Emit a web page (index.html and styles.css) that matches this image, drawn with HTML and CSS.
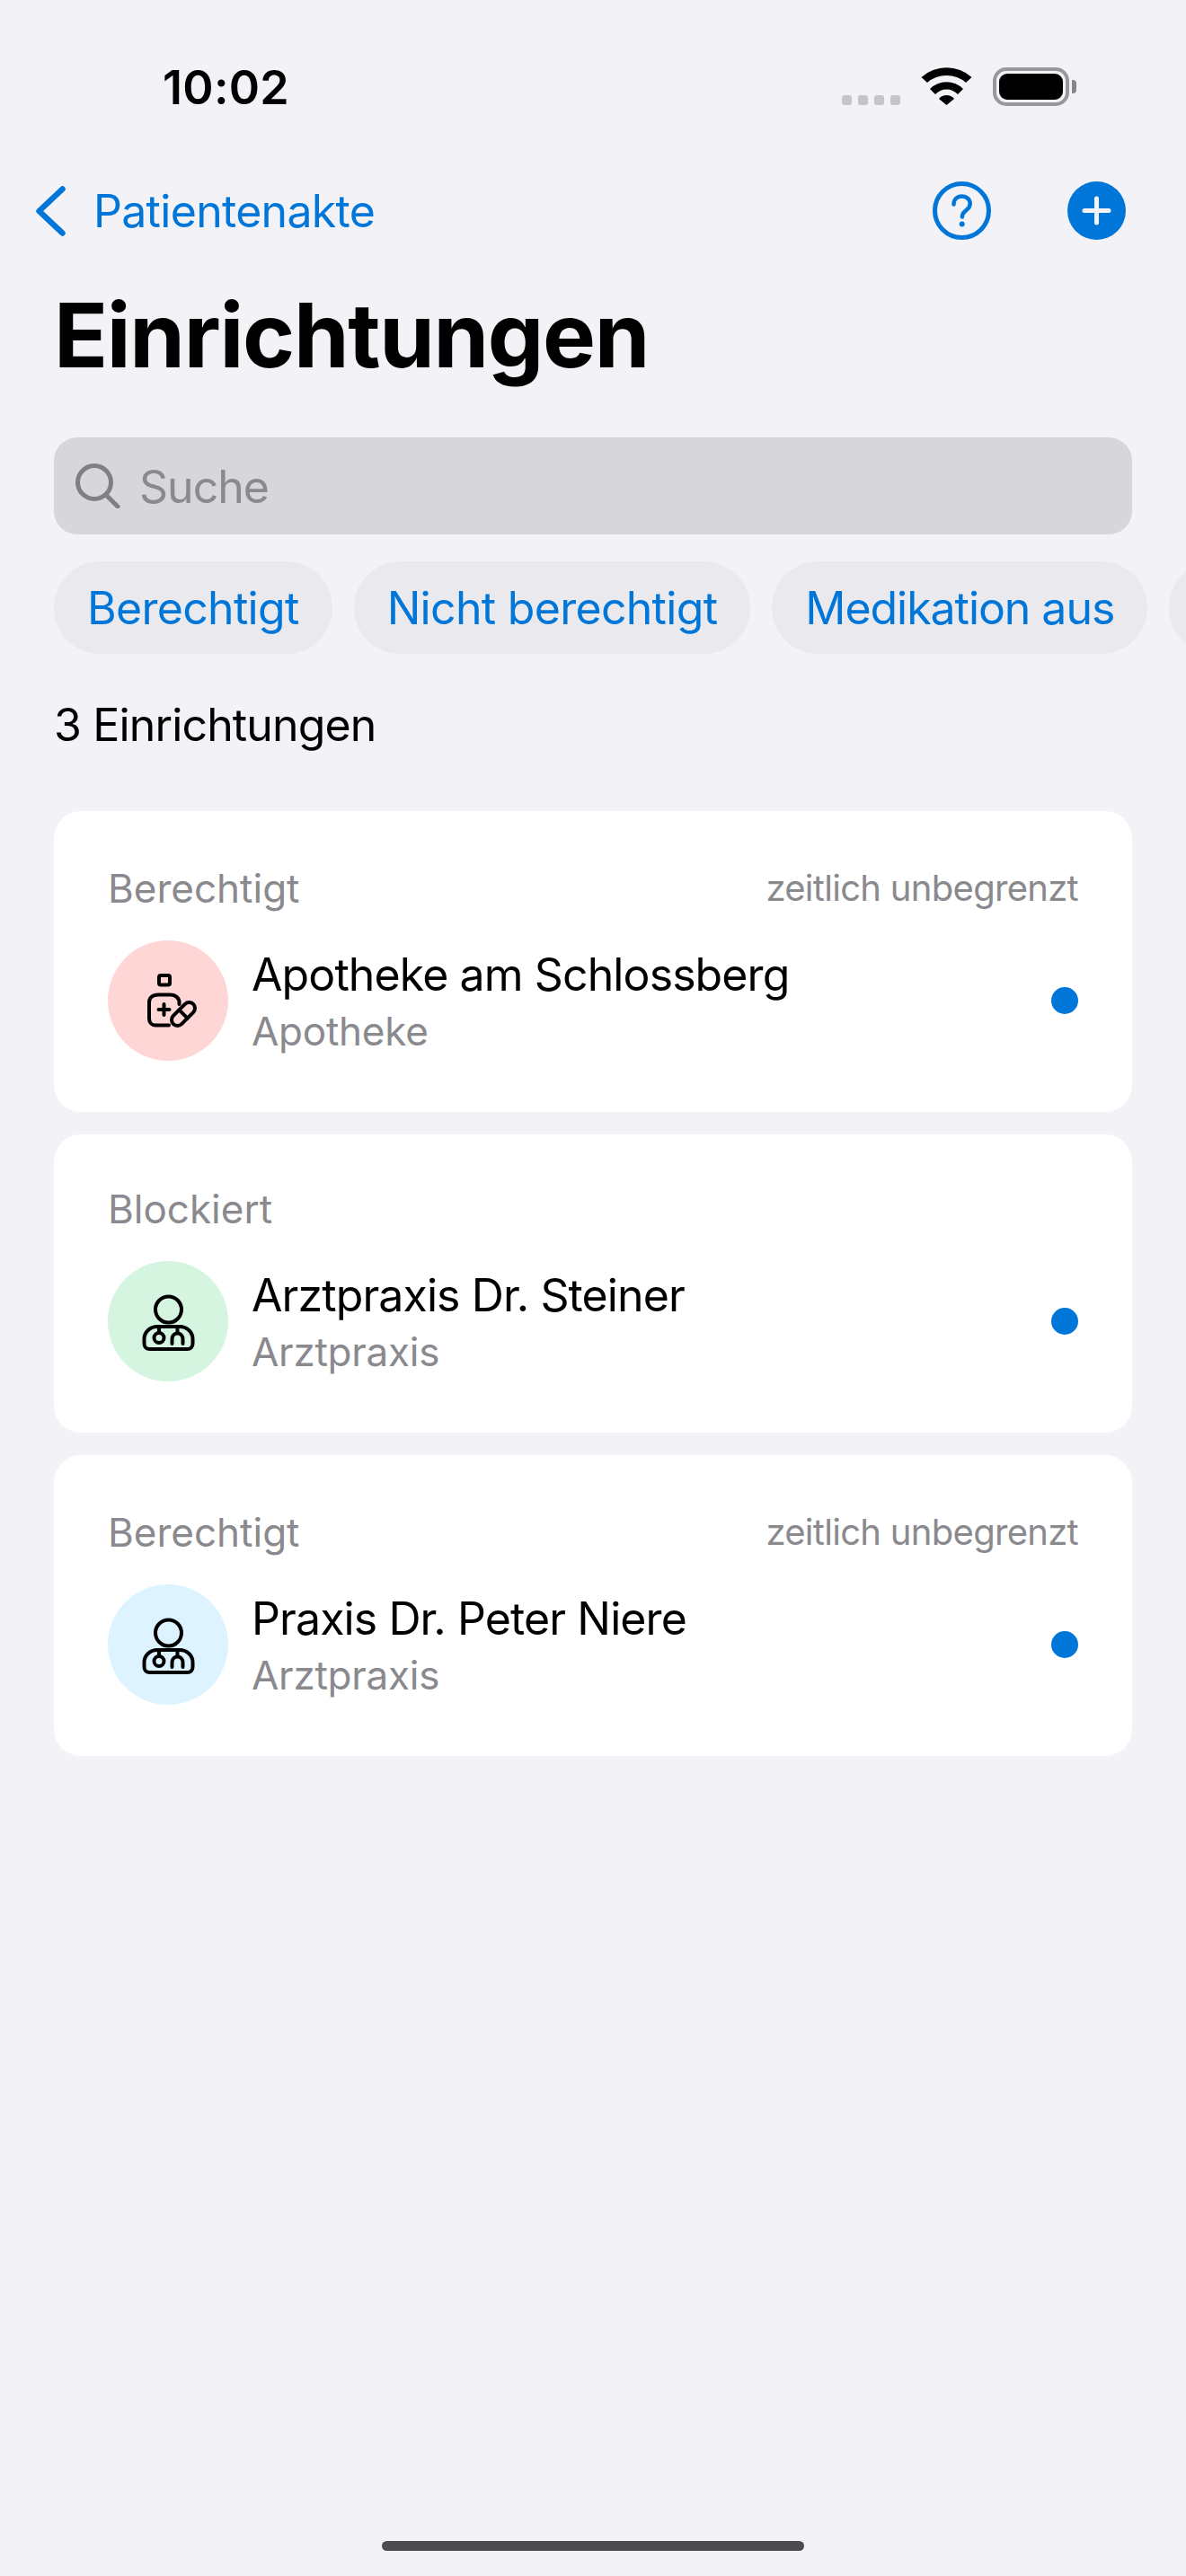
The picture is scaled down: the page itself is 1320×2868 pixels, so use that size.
FILE: index.html
```html
<!DOCTYPE html>
<html lang="de">
<head>
    <meta charset="UTF-8">
    <meta name="viewport" content="width=device-width, initial-scale=1.0">
    <title>Einrichtungen</title>
    <link rel="stylesheet" href="styles.css">
</head>
<body>
    <div class="status-bar">
        <div class="time">10:02</div>
        <div class="status-icons">
            <div class="signal"><span></span><span></span><span></span><span></span></div>
            <svg class="wifi" viewBox="0 0 57 42">
                <path d="M0.5 11A42 42 0 0 1 56.5 11L50 17A33 33 0 0 0 7 17Z"/>
                <path d="M10 24A26 26 0 0 1 47 24L41 30A17 17 0 0 0 16 30Z"/>
                <path d="M20 35A11 11 0 0 1 37 35L28.5 42Z"/>
            </svg>
            <div class="battery"><div class="battery-fill"></div></div>
            <div class="battery-nub"></div>
        </div>
    </div>

    <div class="nav">
        <div class="back">
            <svg class="chevron" viewBox="0 0 33 56">
                <path d="M29.5 3.5 3.5 28l26 24.5"/>
            </svg>
            <span class="back-label">Patientenakte</span>
        </div>
        <div class="nav-actions">
            <svg class="nav-icon" viewBox="0 0 65 65">
                <circle class="help-ring" cx="32.5" cy="32.5" r="30"/>
                <path class="help-mark" d="M23.5 25.5c0-5.500 4-9 9.200-9 5.200 0 9 3.500 9 8.200 0 3.700-2 5.600-4.500 7.600-2.700 2.100-4.300 3.700-4.300 7.200"/>
                <circle class="help-dot" cx="32.700" cy="47.500" r="3"/>
            </svg>
            <svg class="nav-icon" viewBox="0 0 65 65">
                <circle class="plus-disc" cx="32.500" cy="32.500" r="32.500"/>
                <path class="plus-mark" d="M32.500 19v27M19 32.500h27"/>
            </svg>
        </div>
    </div>

    <h1 class="title">Einrichtungen</h1>

    <div class="search">
        <svg class="search-icon" viewBox="0 0 50 50">
            <circle cx="21" cy="21" r="18.500"/>
            <path d="M34 35 47 48"/>
        </svg>
        <span class="search-label">Suche</span>
    </div>

    <div class="chips">
        <div class="chip">Berechtigt</div>
        <div class="chip">Nicht berechtigt</div>
        <div class="chip chip-tight">Medikation aus</div>
        <div class="chip chip-cut"></div>
    </div>

    <p class="count">3 Einrichtungen</p>

    <div class="cards">
        <div class="card">
            <div class="card-head">
                <span class="card-label">Berechtigt</span>
                <span class="card-note">zeitlich unbegrenzt</span>
            </div>
            <div class="card-row">
                <div class="avatar avatar-pink">
                    <svg class="avatar-icon" viewBox="0 0 80 80">
                        <rect x="30" y="12" width="12" height="10.500" rx="2"/>
                        <path d="M52.500 44V42C52.500 37 48 33.500 43 33.500H29C23 33.500 19 37 19 42V60C19 64.500 22 67.500 26 67.500H41"/>
                        <path d="M29.500 50h12M35.500 44v12"/>
                        <rect x="41.300" y="48.500" width="31.400" height="13" rx="6.500" transform="rotate(-45 57 55)"/>
                        <path d="M52.400 50.400 61.600 59.600"/>
                    </svg>
                </div>
                <div class="card-text">
                    <div class="card-name">Apotheke am Schlossberg</div>
                    <div class="card-type">Apotheke</div>
                </div>
                <div class="dot"></div>
            </div>
        </div>

        <div class="card">
            <div class="card-head">
                <span class="card-label">Blockiert</span>
            </div>
            <div class="card-row">
                <div class="avatar avatar-green">
                    <svg class="avatar-icon" viewBox="0 0 80 80">
                        <circle cx="40.500" cy="27" r="14.500"/>
                        <path d="M13.500 60C13.500 52 20 46 28 46H53C61 46 67.500 52 67.500 60V65C67.500 68.500 65 71 61.500 71H19.500C16 71 13.500 68.500 13.500 65Z"/>
                        <path d="M30 46V53"/>
                        <circle cx="30" cy="58.500" r="5.500"/>
                        <path d="M44.500 65V60C44.500 56 47 53.500 50.500 53.500S56.500 56 56.500 60V65M50.500 46V53.500"/>
                    </svg>
                </div>
                <div class="card-text">
                    <div class="card-name">Arztpraxis Dr. Steiner</div>
                    <div class="card-type">Arztpraxis</div>
                </div>
                <div class="dot"></div>
            </div>
        </div>

        <div class="card">
            <div class="card-head">
                <span class="card-label">Berechtigt</span>
                <span class="card-note">zeitlich unbegrenzt</span>
            </div>
            <div class="card-row">
                <div class="avatar avatar-blue">
                    <svg class="avatar-icon" viewBox="0 0 80 80">
                        <circle cx="40.500" cy="27" r="14.500"/>
                        <path d="M13.500 60C13.500 52 20 46 28 46H53C61 46 67.500 52 67.500 60V65C67.500 68.500 65 71 61.500 71H19.500C16 71 13.500 68.500 13.500 65Z"/>
                        <path d="M30 46V53"/>
                        <circle cx="30" cy="58.500" r="5.500"/>
                        <path d="M44.500 65V60C44.500 56 47 53.500 50.500 53.500S56.500 56 56.500 60V65M50.500 46V53.500"/>
                    </svg>
                </div>
                <div class="card-text">
                    <div class="card-name">Praxis Dr. Peter Niere</div>
                    <div class="card-type">Arztpraxis</div>
                </div>
                <div class="dot"></div>
            </div>
        </div>
    </div>

    <div class="home-indicator"></div>
</body>
</html>
```

FILE: styles.css
```css
* {
    margin: 0;
    padding: 0;
    box-sizing: border-box;
}

body {
    font-family: Inter, "Liberation Sans", sans-serif;
    background: #f2f2f7;
    color: #000;
    min-height: 100vh;
    display: flex;
    flex-direction: column;
    overflow: hidden;
}

.status-bar {
    display: flex;
    justify-content: space-between;
    align-items: flex-start;
    height: 202px;
    padding: 75px 122px 0 181px;
}

.time {
    font-size: 52px;
    font-weight: 600;
    line-height: 46px;
    letter-spacing: 0.3px;
}

.status-icons {
    display: flex;
    align-items: flex-start;
}

.signal {
    display: flex;
    gap: 7px;
    margin: 31px 23px 0 0;
}

.signal span {
    width: 11px;
    height: 11px;
    border-radius: 3px;
    background: #c4c4c9;
}

.wifi {
    width: 57px;
    height: 42px;
    margin-right: 23px;
    fill: #000;
}

.battery {
    width: 85px;
    height: 43px;
    padding: 3px;
    border: 4px solid #98989c;
    border-radius: 15px;
}

.battery-fill {
    height: 100%;
    background: #000;
    border-radius: 9px;
}

.battery-nub {
    width: 5px;
    height: 15px;
    margin: 14px 0 0 3px;
    background: #86868a;
    border-radius: 0 4px 4px 0;
}

.nav {
    display: flex;
    justify-content: space-between;
    align-items: center;
    height: 65px;
    padding: 0 67px 0 40px;
}

.back {
    display: flex;
    align-items: center;
    gap: 31px;
    color: #0076d8;
    font-size: 50px;
    line-height: 65px;
    letter-spacing: -0.7px;
}

.back-label {
    padding-top: 2px;
}

.chevron {
    width: 33px;
    height: 56px;
    fill: none;
    stroke: #0076d8;
    stroke-width: 6.5px;
    stroke-linecap: round;
    stroke-linejoin: round;
}

.nav-actions {
    display: flex;
    gap: 85px;
}

.nav-icon {
    display: block;
    width: 65px;
    height: 65px;
}

.help-ring {
    fill: none;
    stroke: #0076d8;
    stroke-width: 5px;
}

.help-mark {
    fill: none;
    stroke: #0076d8;
    stroke-width: 4.500px;
    stroke-linecap: round;
}

.help-dot {
    fill: #0076d8;
}

.plus-disc {
    fill: #0076d8;
}

.plus-mark {
    fill: none;
    stroke: #f2f2f7;
    stroke-width: 5px;
    stroke-linecap: round;
}

.title {
    margin: 56px 0 64px 60px;
    font-size: 99px;
    font-weight: 700;
    line-height: 100px;
    letter-spacing: -1.3px;
}

.search {
    display: flex;
    align-items: center;
    gap: 21px;
    height: 108px;
    margin: 0 60px;
    padding-left: 24px;
    background: #d6d6db;
    border-radius: 26px;
    color: #8a8a8e;
    font-size: 50px;
    letter-spacing: -1px;
}

.search-label {
    padding-top: 1px;
}

.search-icon {
    width: 50px;
    height: 50px;
    fill: none;
    stroke: #7f7f84;
    stroke-width: 5px;
    stroke-linecap: round;
}

.chips {
    display: flex;
    gap: 24px;
    margin-top: 30px;
    padding-left: 60px;
    overflow: hidden;
}

.chip {
    flex: none;
    height: 103px;
    padding: 0 37px;
    background: #e9e9ee;
    border-radius: 52px;
    color: #0076d8;
    font-size: 50px;
    line-height: 104px;
    letter-spacing: -0.7px;
}

.chip-tight {
    letter-spacing: -1.05px;
}

.chip-cut {
    width: 120px;
}

.count {
    margin: 49px 0 66px 60px;
    font-size: 50px;
    line-height: 60px;
    letter-spacing: -0.85px;
}

.cards {
    display: flex;
    flex-direction: column;
    gap: 25px;
    padding: 0 60px;
}

.card {
    padding: 58px 60px 57px;
    background: #fff;
    border-radius: 30px;
}

.card-head {
    display: flex;
    justify-content: space-between;
    align-items: flex-end;
    margin-bottom: 33px;
}

.card-label {
    color: #8a8a8e;
    font-size: 44px;
    line-height: 50px;
}

.card-note {
    margin-bottom: -2px;
    color: #8a8a8e;
    font-size: 40px;
    line-height: 55px;
    letter-spacing: -0.7px;
}

.card-row {
    display: flex;
    align-items: center;
    gap: 26px;
}

.avatar {
    display: flex;
    align-items: center;
    justify-content: center;
    flex: none;
    width: 134px;
    height: 134px;
    border-radius: 50%;
}

.avatar-pink {
    background: #ffd6d6;
}

.avatar-green {
    background: #d6f5e0;
}

.avatar-blue {
    background: #ddf3ff;
}

.avatar-icon {
    width: 80px;
    height: 80px;
    fill: none;
    stroke: #000;
    stroke-width: 4px;
    stroke-linecap: round;
    stroke-linejoin: round;
}

.card-text {
    flex: 1;
    padding-top: 2px;
}

.card-name {
    font-size: 50px;
    line-height: 62px;
    letter-spacing: -0.9px;
}

.card-type {
    margin-top: 4px;
    color: #8a8a8e;
    font-size: 44px;
    line-height: 56px;
    letter-spacing: -0.25px;
}

.dot {
    flex: none;
    width: 30px;
    height: 30px;
    background: #0076d8;
    border-radius: 50%;
}

.home-indicator {
    width: 470px;
    height: 11px;
    margin: auto auto 28px;
    background: #4c4c50;
    border-radius: 6px;
}
```
